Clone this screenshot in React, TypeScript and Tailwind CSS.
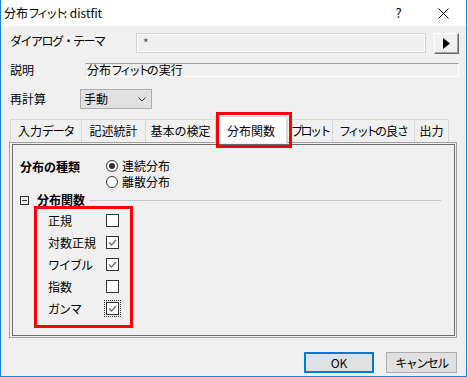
import React from "react";

const Check = ({ checked, focus }: { checked: boolean; focus?: boolean }) => (
  <div className={focus ? "w-[17px] h-[17px] border border-dotted border-[#333] flex items-center justify-center" : "w-[17px] h-[17px] flex items-center justify-center"}>
    <div className="w-[13px] h-[13px] border border-[#333] bg-white flex items-center justify-center">
      {checked && (
        <svg width="11" height="11" viewBox="0 0 11 11">
          <path d="M2 5.5 L4.5 8 L9 3" fill="none" stroke="#6d6d6d" strokeWidth="1.4" />
        </svg>
      )}
    </div>
  </div>
);

const Radio = ({ on }: { on: boolean }) => (
  <div className="w-[12px] h-[12px] rounded-full border border-[#333] bg-white flex items-center justify-center">
    {on && <div className="w-[6px] h-[6px] rounded-full bg-[#333]" />}
  </div>
);

const Fit = () => <span className="tracking-[-3px]">フィット</span>;

export default function App() {
  const tabs: { t: React.ReactNode; k: string; w: string; sel?: boolean }[] = [
    { k: "a", t: <>入力<span className="tracking-[-1.3px]">データ</span></>, w: "w-[72px]" },
    { k: "b", t: "記述統計", w: "w-[65px]" },
    { k: "c", t: "基本の検定", w: "w-[71px]" },
    { k: "d", t: "分布関数", w: "w-[72px]", sel: true },
    { k: "e", t: <span className="tracking-[-2.5px]">プロット</span>, w: "w-[46px]" },
    { k: "f", t: <><Fit /><span className="tracking-[-1px]">の良さ</span></>, w: "w-[83px]" },
    { k: "g", t: "出力", w: "w-[35px]" },
  ];
  const items = [
    { t: "正規", c: false, tr: "" },
    { t: "対数正規", c: true, tr: "" },
    { t: "ワイブル", c: true, tr: "tracking-[-1px]" },
    { t: "指数", c: false, tr: "" },
    { t: "ガンマ", c: true, f: true, tr: "tracking-[-1px]" },
  ];
  return (
    <div className="w-[468px] h-[377px] bg-white relative font-['Noto_Sans_CJK_JP',sans-serif] text-[12px] text-black">
      <div className="w-[467px] h-[377px] border-x border-b border-[#1883d7] bg-[#f0f0f0] flex flex-col">
        {/* title bar */}
        <div className="h-[26px] bg-white flex items-center">
          <div className="pl-[3px] flex-1 leading-[14px] text-[#000] whitespace-nowrap">
            分布<Fit />: distfit
          </div>
          <div className="w-[45px] h-[26px] flex items-center justify-center text-[13px]">?</div>
          <div className="w-[45px] h-[26px] flex items-center justify-center">
            <svg width="11" height="11" viewBox="0 0 11 11">
              <path d="M0.5 0.5 L10.5 10.5 M10.5 0.5 L0.5 10.5" stroke="#000" strokeWidth="1" />
            </svg>
          </div>
        </div>

        {/* row 1 */}
        <div className="mt-[7px] h-[21px] flex items-start pl-[9px]">
          <div className="w-[126px] h-[16px] leading-[16px] whitespace-nowrap tracking-[-1.5px]">ダイアログ・テーマ</div>
          <div className="w-[290px] h-[20px] border border-[#d2d2d2] shadow-[inset_0_0_0_1px_#ffffff] bg-[#efefef] flex items-center pl-[6px] text-[#555]">
            *
          </div>
          <div className="ml-[8px] w-[25px] h-[21px] border border-t-white border-l-white border-r-[#696969] border-b-[#696969] shadow-[inset_-1px_-1px_0_#a0a0a0] bg-[#f0f0f0] flex items-center justify-center">
            <svg width="7" height="11" viewBox="0 0 7 11">
              <path d="M0 0 L7 5.5 L0 11 Z" fill="#000" />
            </svg>
          </div>
        </div>

        {/* row 2 */}
        <div className="mt-[9px] h-[14px] flex items-center pl-[9px]">
          <div className="w-[75px] leading-[14px]">説明</div>
          <div className="w-[374px] h-[14px] border-t border-l border-t-[#a0a0a0] border-l-[#e3e3e3] border-b border-r border-b-white border-r-white flex items-center pl-[1px] leading-[12px] whitespace-nowrap">
            分布<Fit />の実行
          </div>
        </div>

        {/* row 3 */}
        <div className="mt-[12px] h-[20px] flex items-center pl-[9px]">
          <div className="w-[70px] leading-[14px]">再計算</div>
          <div className="w-[72px] h-[20px] border border-[#adadad] bg-[#e1e1e1] flex items-center justify-between pl-[3px] pr-[5px]">
            <span className="leading-[14px]">手動</span>
            <svg width="8" height="5" viewBox="0 0 8 5">
              <path d="M0.5 0.5 L4 4 L7.5 0.5" fill="none" stroke="#333" strokeWidth="1" />
            </svg>
          </div>
        </div>

        {/* tabs */}
        <div className="mt-[7px] h-[26px] flex items-end pl-[9px] relative z-10">
          {tabs.map((tb) =>
            tb.sel ? (
              <div key={tb.k} className={`${tb.w} h-[27px] -mb-[1px] bg-white border-x border-t border-[#d9d9d9] flex items-center justify-center pt-[1px]`}>
                <span className="leading-[14px] whitespace-nowrap">{tb.t}</span>
              </div>
            ) : (
              <div key={tb.k} className={`${tb.w} h-[23px] bg-[#f0f0f0] border-x border-t border-[#d9d9d9] -mr-[1px] last:mr-0 flex items-center justify-center`}>
                <span className="leading-[14px] whitespace-nowrap">{tb.t}</span>
              </div>
            )
          )}
        </div>

        {/* panel */}
        <div className="ml-[8px] w-[448px] h-[196px] border border-[#a0a0a0] pt-[1px] pl-[2px] pr-[1px] pb-[1px]">
          <div className="w-full h-full border border-[#6d6d6d] pl-[7px] pt-[15px]">
            <div className="flex items-start">
              <div className="w-[86px] font-bold leading-[14px]">分布の種類</div>
              <div className="flex flex-col gap-[4px]">
                <div className="flex items-center gap-[4px] h-[12px]">
                  <Radio on={true} />
                  <span className="leading-[14px]">連続分布</span>
                </div>
                <div className="flex items-center gap-[4px] h-[12px]">
                  <Radio on={false} />
                  <span className="leading-[14px]">離散分布</span>
                </div>
              </div>
            </div>

            <div className="mt-[6px] h-[12px] flex items-center">
              <div className="w-[9px] h-[9px] border border-[#333] flex items-center justify-center">
                <div className="w-[5px] h-[1px] bg-[#333]" />
              </div>
              <span className="ml-[8px] font-bold leading-[14px]">分布関数</span>
              <div className="ml-[4px] w-[352px] h-[1px] bg-[#c8c8c8]" />
            </div>

            <div className="ml-[14px] mt-0 w-[99px] h-[122px] border-[3px] border-[#ff0000] pl-[11px] pt-[3px] flex flex-col gap-[5px]">
              {items.map((it) => (
                <div key={it.t} className="h-[17px] flex items-center">
                  <span className={`w-[56px] leading-[14px] whitespace-nowrap ${it.tr}`}>{it.t}</span>
                  <Check checked={it.c} focus={it.f} />
                </div>
              ))}
            </div>
          </div>
        </div>

        {/* buttons */}
        <div className="mt-[14px] flex pl-[303px] gap-[12px]">
          <div className="w-[70px] h-[21px] border-2 border-[#0078d7] bg-[#e1e1e1] flex items-center justify-center leading-[14px]">OK</div>
          <div className="w-[71px] h-[21px] border border-[#adadad] bg-[#e1e1e1] flex items-center justify-center leading-[14px] tracking-[-1.5px]">キャンセル</div>
        </div>
      </div>

      {/* red highlight around selected tab */}
      <div className="absolute left-[216px] top-[112px] w-[76px] h-[36px] border-[3px] border-[#ff0000] z-20 pointer-events-none" />
    </div>
  );
}
